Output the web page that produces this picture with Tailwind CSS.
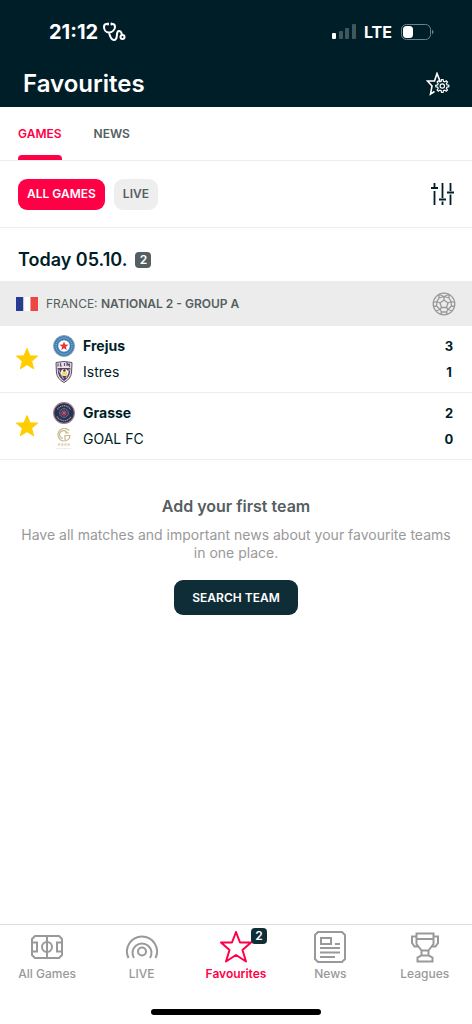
<!DOCTYPE html>
<html lang="en">
<head>
  <meta charset="UTF-8" />
  <title>Favourites</title>
  <meta name="viewport" content="width=device-width, initial-scale=1" />
  <script src="https://cdn.jsdelivr.net/npm/@tailwindcss/browser@4"></script>
</head>
<body class="flex min-h-screen flex-col bg-white font-['Inter',sans-serif] text-sm text-[#001e28]">

  <!-- Header -->
  <header class="bg-[#001e28] text-white">
    <div class="flex h-16 items-center justify-between pr-[38px] pl-[49px]">
      <div class="flex items-center gap-1">
        <span class="text-xl font-bold">21:12</span>
        <svg class="h-5 w-6" viewBox="0 0 24 20" fill="none" stroke="currentColor" stroke-width="2" stroke-linecap="round" stroke-linejoin="round">
          <path d="M4.500 2C2.500 2 2 3 2 5c0 3 2 5.500 5 5.500S13 8 13 5c0-2-.5-3-2.500-3M7 10.500C8 15 9 18 12 18c5 0 1-9 5-9 2.500 0 2.500 2 3 4" />
          <path d="M6 1.500v1M9.500 1.500v1" />
          <circle cx="20.500" cy="15" r="2" />
        </svg>
      </div>
      <div class="flex items-center gap-2">
        <svg class="h-4 w-6" viewBox="0 0 24 16" fill="currentColor">
          <rect x="0" y="9" width="4" height="6" rx="1" />
          <g opacity=".25">
            <rect x="7" y="7" width="4" height="8" rx="1" />
            <rect x="13" y="4" width="4" height="11" rx="1" />
            <rect x="20" y="0" width="4" height="15" rx="1" />
          </g>
        </svg>
        <span class="text-base font-bold">LTE</span>
        <svg class="h-4 w-[34px]" viewBox="0 0 34 16">
          <rect x="1.500" y=".5" width="29" height="15" rx="5" fill="none" stroke="#728087" />
          <rect x="3" y="2" width="10" height="12" rx="3.500" fill="#fff" />
          <path d="M32 5.500q3 2.500 0 5z" fill="#728087" />
        </svg>
      </div>
    </div>
    <div class="flex h-[43px] items-center justify-between pr-[22px] pb-1 pl-[23px]">
      <h1 class="text-2xl font-semibold">Favourites</h1>
      <button type="button" aria-label="Favourites settings">
        <svg class="h-6 w-6" viewBox="0 0 24 24" fill="none" stroke="currentColor" stroke-width="1.600">
          <path d="M14 9 11 1.500 8.500 9H1.500L6 14 4.500 22l4-2.500" />
          <path d="m15.200 9.300.3-1.800h1.600l.3 1.800 1.400.6 1.500-1.100 1.200 1.200-1.100 1.500.6 1.400 1.800.3v1.600l-1.800.3-.6 1.400 1.100 1.500-1.200 1.200-1.500-1.100-1.400.6-.3 1.800h-1.600l-.3-1.800-1.400-.6-1.500 1.100-1.200-1.200 1.100-1.500-.6-1.400-1.800-.3v-1.600l1.800-.3.6-1.400-1.100-1.500 1.200-1.200 1.500 1.100z" stroke-width="1.200" />
          <circle cx="16.300" cy="14" r="2.200" stroke-width="1.200" />
        </svg>
      </button>
    </div>
  </header>

  <!-- Tabs -->
  <nav class="flex h-[54px] gap-8 border-b border-[#ececec] px-[18px] text-xs font-semibold">
    <a href="#games" class="relative flex items-center text-[#ff0046]">
      GAMES
      <span class="absolute inset-x-0 bottom-0 h-[5px] rounded-t bg-[#ff0046]"></span>
    </a>
    <a href="#news" class="flex items-center text-[#555e61]">NEWS</a>
  </nav>

  <main class="flex-1">
    <!-- Filters -->
    <div class="flex h-[67px] items-center justify-between border-b border-[#ececec] px-[18px] text-xs font-semibold">
      <div class="flex gap-[9px]">
        <button type="button" class="h-[31px] rounded-[9px] bg-[#ff0046] px-[9px] text-white">ALL GAMES</button>
        <button type="button" class="h-[31px] rounded-[9px] bg-[#eeeeee] px-[9px] text-[#555e61]">LIVE</button>
      </div>
      <button type="button" aria-label="Filter">
        <svg class="h-6 w-6" viewBox="0 0 24 24" fill="none" stroke="currentColor" stroke-width="1.800">
          <path d="M4.500 1v5.500M4.500 9v14M1 6h7M12.500 1v15M12.500 19.500V23M9 17.500h7M20.500 1v8M20.500 12.500V23M17 10.500h7" />
        </svg>
      </button>
    </div>

    <div class="flex h-[53px] items-center gap-2 px-[18px] pt-[10px]">
      <h2 class="text-lg font-semibold">Today 05.10.</h2>
      <span class="flex h-4 w-4 items-center justify-center rounded bg-[#555e61] text-xs font-semibold text-white">2</span>
    </div>

    <!-- League -->
    <div class="flex h-[45px] items-center bg-[#ececec] px-4 text-xs text-[#555e61]">
      <svg class="mr-2 h-4 w-[22px]" viewBox="0 0 22 16">
        <path fill="#273b91" d="M0 1h7.500v14H0z" />
        <path fill="#fff" d="M7.500 1h7v14h-7z" />
        <path fill="#ee4540" d="M14.500 1H22v14h-7.500z" />
      </svg>
      <p class="flex-1">FRANCE: <b class="font-semibold">NATIONAL 2 - GROUP A</b></p>
      <svg class="h-6 w-6" viewBox="0 0 24 24" fill="none" stroke="#999" stroke-width="1.300" stroke-linejoin="round">
        <circle cx="12" cy="12" r="10.800" />
        <path d="m12 8 4 3-1.500 4.500h-5L8 11zM12 8V4.500M16 11l3-1.500M14.500 15.500l1.500 2M9.500 15.500l-1.500 2M8 11 5 9.500M7 2.500l5 2 5-2M5 9.500l2-3.500 5-1.500M19 9.500 17 6l-5-1.500M7 6V2.500M17 6V2.500M5 9.500l-3.500 1M19 9.500l3.500 1M5 9.500 4.500 14 8 17.500M19 9.500l.5 4.500-3.500 3.500M4.500 14l-3 .5M19.500 14l3 .5M8 17.500 4 19M16 17.500l4 1.500M8 17.500l1.500 2.500h5l1.500-2.500M9.500 20 8.500 22.500M14.500 20l1 2.500" />
      </svg>
    </div>

    <!-- Frejus - Istres -->
    <article class="flex h-[67px] items-center border-b border-[#ececec] px-[15px]">
      <button type="button" aria-label="Remove Frejus - Istres from favourites" class="mr-[14px]">
        <svg class="h-6 w-6" viewBox="0 0 22 22" fill="#ffcd00" stroke="#ffcd00" stroke-linejoin="round">
          <path d="m11 1.500 2.700 6.500 6.800.4-5.300 4.500 1.800 6.900L11 16l-6 3.800 1.800-6.900L1.500 8.400 8.300 8z" />
        </svg>
      </button>
      <div class="flex-1 space-y-1">
        <div class="flex items-center gap-2">
          <svg class="h-[22px] w-[22px]" viewBox="0 0 22 22">
            <circle cx="11" cy="11" r="10.500" fill="#3f7fb4" stroke="#8fa5bb" />
            <circle cx="11" cy="11" r="8" fill="none" stroke="#a8cce5" stroke-dasharray="1 1" />
            <circle cx="11" cy="11" r="6.200" fill="#fff" stroke="#255f99" stroke-width=".7" />
            <path fill="#e3373b" d="m11 6.500 1.200 3.100 3.300.2-2.600 2 .9 3.300-2.800-1.900-2.800 1.900.9-3.300-2.600-2 3.300-.2z" />
          </svg>
          <span class="grow font-bold">Frejus</span>
          <span class="w-4 text-center text-[13px] leading-5 font-bold">3</span>
        </div>
        <div class="flex items-center gap-2">
          <svg class="h-[22px] w-[22px]" viewBox="0 0 22 22">
            <path d="M3 1.500q8-2 16 0l-.4 9.500Q18 18 11 21.500 4 18 3.400 11z" fill="#e9e3ea" stroke="#5b4d66" />
            <path d="M4.500 7h13l-.5 4.500Q16 17 11 20 6 17 5 11.500z" fill="#55435f" />
            <path d="M5 2.500v3M7.500 2V5h1.500M11.500 2v3M14 5V2l2.500 3V2.500" fill="none" stroke="#64546a" stroke-width="1.200" />
            <path d="M5.500 8.500 9 15l1.500 3M16.500 8 13 17" fill="none" stroke="#b8a8bd" stroke-width="1.200" />
            <circle cx="11.500" cy="11.500" r="3.600" fill="#fff" />
            <circle cx="11.500" cy="12" r="2.500" fill="#f0dc61" />
            <path d="m10 9 1.500-1L13 9l-1 1.500h-1.500z" fill="#43324f" />
          </svg>
          <span class="grow">Istres</span>
          <span class="w-4 text-center text-[13px] leading-5 font-bold">1</span>
        </div>
      </div>
    </article>

    <!-- Grasse - GOAL FC -->
    <article class="flex h-[67px] items-center border-b border-[#ececec] px-[15px]">
      <button type="button" aria-label="Remove Grasse - GOAL FC from favourites" class="mr-[14px]">
        <svg class="h-6 w-6" viewBox="0 0 22 22" fill="#ffcd00" stroke="#ffcd00" stroke-linejoin="round">
          <path d="m11 1.500 2.700 6.500 6.800.4-5.300 4.500 1.800 6.900L11 16l-6 3.800 1.800-6.900L1.500 8.400 8.300 8z" />
        </svg>
      </button>
      <div class="flex-1 space-y-1">
        <div class="flex items-center gap-2">
          <svg class="h-[22px] w-[22px]" viewBox="0 0 22 22" fill="none">
            <circle cx="11" cy="11" r="10.400" fill="#1e3655" stroke="#b77483" stroke-width="1.100" />
            <path d="M4.500 7.500a7.500 7.500 0 0 1 13 0M4 14.500a8 8 0 0 0 14 0" stroke="#8d9bb0" stroke-width="1.300" stroke-dasharray="1.200 .7" />
            <circle cx="11" cy="11" r="4.500" fill="#343654" stroke="#a1506b" />
            <path d="M11 7.500v7M7.500 11h7M8.500 8.500l5 5M13.500 8.500l-5 5" stroke="#c75f77" stroke-width=".8" />
          </svg>
          <span class="grow font-bold">Grasse</span>
          <span class="w-4 text-center text-[13px] leading-5 font-bold">2</span>
        </div>
        <div class="flex items-center gap-2">
          <svg class="h-[22px] w-[22px]" viewBox="0 0 22 22" fill="none" stroke="#c9b98e">
            <path d="M16 2.500A6.300 6.300 0 1 0 11 13c3.500 0 6-2.500 6-5.500h-5V12M14 4.500A4 4 0 1 0 10 10.500M12 5h4" stroke-width="1.200" />
            <path d="M5 16.500h12" stroke-width="2.500" stroke-dasharray="2.200 1" opacity=".6" />
            <path d="M3.500 20.500h15" stroke-dasharray="1 .5" opacity=".4" />
          </svg>
          <span class="grow">GOAL FC</span>
          <span class="w-4 text-center text-[13px] leading-5 font-bold">0</span>
        </div>
      </div>
    </article>

    <!-- Empty state -->
    <section class="px-4 pt-9 text-center">
      <h3 class="text-base leading-5 font-semibold text-[#555e61]">Add your first team</h3>
      <p class="mt-[10px] text-sm leading-[18px] text-[#999]">Have all matches and important news about your favourite teams in one place.</p>
      <button type="button" class="mt-[18px] h-[35px] rounded-[9px] bg-[#0f2d37] px-[18px] text-xs font-semibold text-white">SEARCH TEAM</button>
    </section>
  </main>

  <!-- Bottom navigation -->
  <footer class="border-t border-[#dddddd]">
    <nav class="grid h-[84px] grid-cols-5 text-xs leading-4 font-medium text-[#999]">
      <a href="#all" class="flex flex-col items-center pt-[3px]">
        <svg class="h-[38px] w-[38px]" viewBox="1 1 38 38" fill="none" stroke="currentColor" stroke-width="2">
          <path d="M8 9h24l3 3v16l-3 3H8l-3-3V12zM20 9v22M5 15.500h5v9H5M35 15.500h-5v9h5" />
          <circle cx="20" cy="20" r="5" />
        </svg>
        All Games
      </a>
      <a href="#live" class="flex flex-col items-center pt-[3px]">
        <svg class="h-[38px] w-[38px]" viewBox="1 1 38 38" fill="none" stroke="currentColor" stroke-width="2">
          <path d="M6.500 31a15 15 0 1 1 27 0M12 31a9.500 9.500 0 1 1 16 0" />
          <circle cx="20" cy="24.500" r="4" />
        </svg>
        LIVE
      </a>
      <a href="#favourites" class="flex flex-col items-center pt-[3px] font-semibold text-[#ff0046]">
        <span class="relative">
          <svg class="h-[38px] w-[38px]" viewBox="1 1 38 38" fill="none" stroke="currentColor" stroke-width="2" stroke-linejoin="round">
            <path d="m20 5 4 10.500h11L26.500 23 30 34.500 20 28l-10 6.500L13.500 23 5 15.500h11z" />
          </svg>
          <span class="absolute top-0 -right-3 flex h-4 w-4 items-center justify-center rounded bg-[#0f2d37] text-white">2</span>
        </span>
        Favourites
      </a>
      <a href="#latest" class="flex flex-col items-center pt-[3px]">
        <svg class="h-[38px] w-[38px]" viewBox="1 1 38 38" fill="none" stroke="currentColor" stroke-width="2">
          <path d="M8 5h24l3 3v24l-3 3H8l-3-3V8zM11 11h10v6H11zM25 17h5M10 21h20M10 25.500h20M10 30h15" />
        </svg>
        News
      </a>
      <a href="#leagues" class="flex flex-col items-center pt-[3px]">
        <svg class="h-[38px] w-[38px]" viewBox="1 1 38 38" fill="none" stroke="currentColor" stroke-width="2">
          <path d="M11.500 6.500h17V17l-5 6.500v5l4 2v4h-15v-4l4-2v-5l-5-6.500zM11.500 12h17M11.500 9.500H7V16l2.500 3.500h4M28.500 9.500H33V16l-2.500 3.500h-4M16.500 23.500h7M16.500 28.500h7" />
        </svg>
        Leagues
      </a>
    </nav>
    <div class="mx-auto mb-[9px] h-[6px] w-[36%] rounded-full bg-black"></div>
  </footer>
</body>
</html>
